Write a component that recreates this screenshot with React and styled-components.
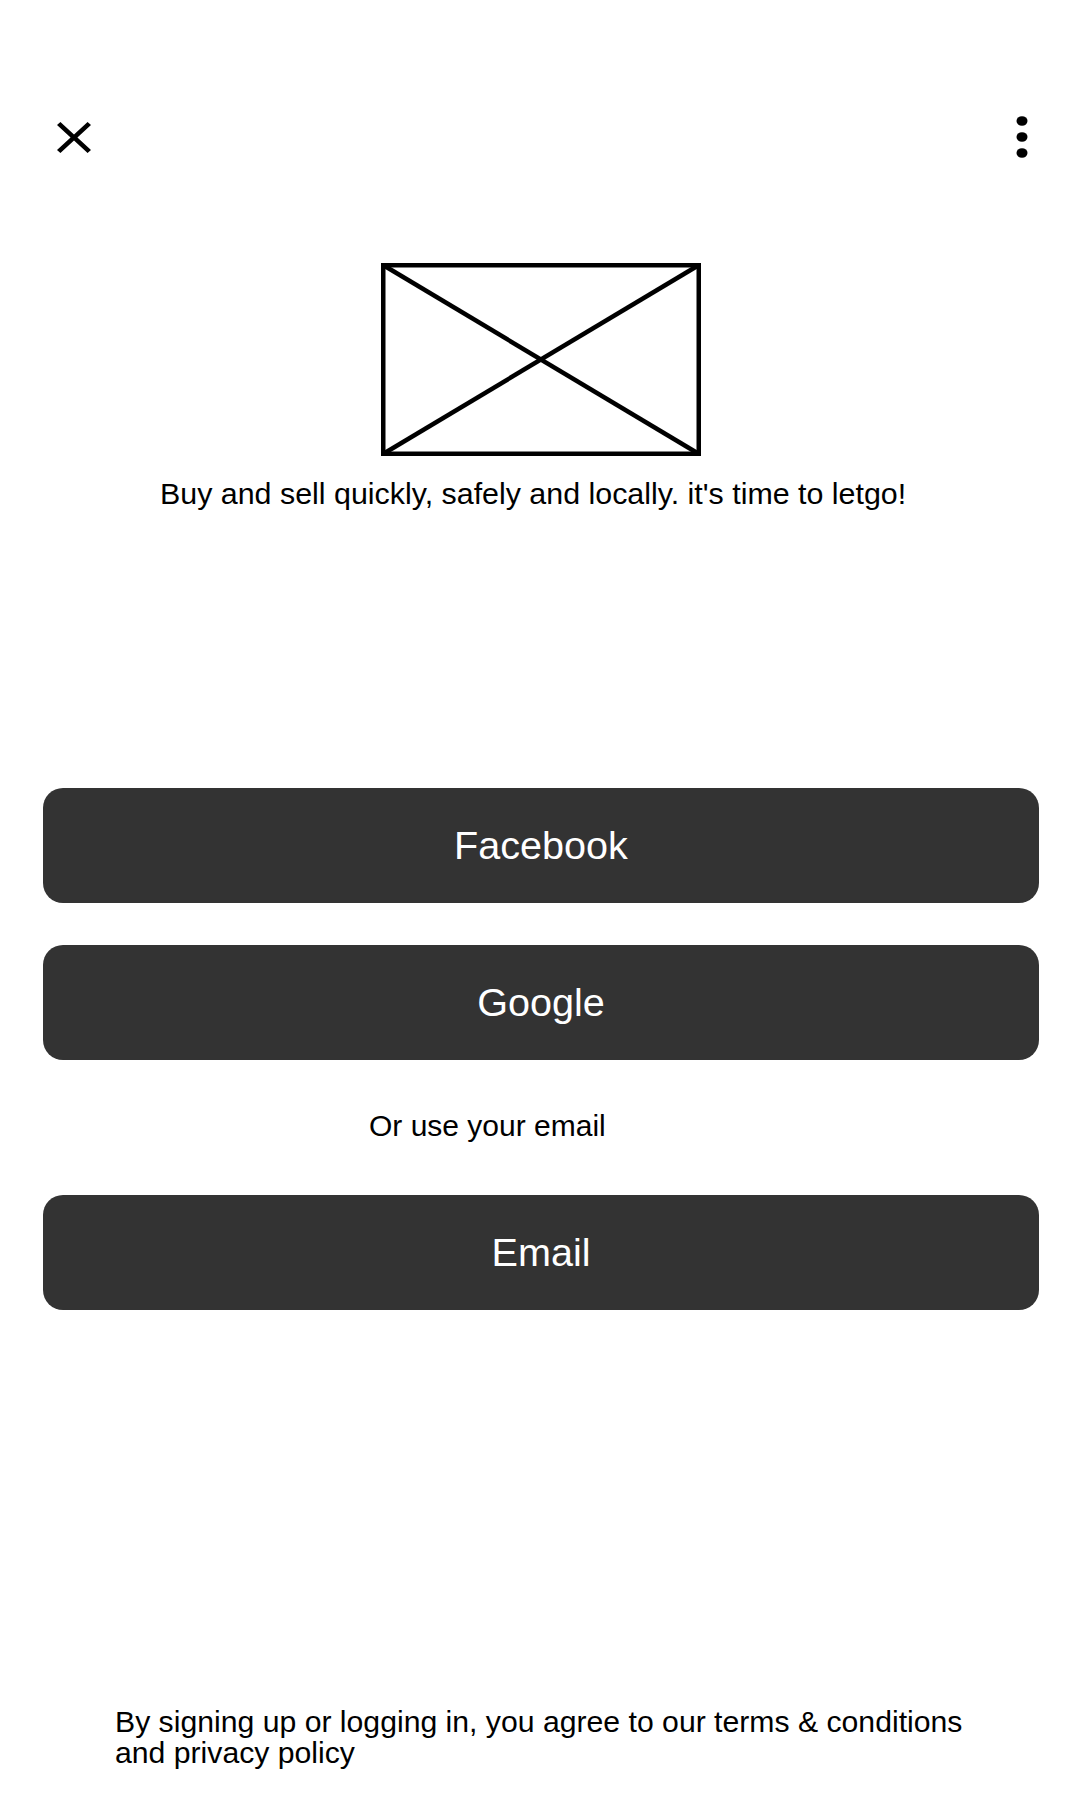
import styled, { createGlobalStyle } from 'styled-components'

const GlobalStyle = createGlobalStyle`
  html, body {
    margin: 0;
    padding: 0;
    background: #ffffff;
  }
  body {
    font-family: "Liberation Sans", Arial, sans-serif;
    color: #000000;
  }
`

const Page = styled.div`
  display: flex;
  flex-direction: column;
  box-sizing: border-box;
  width: 1080px;
  min-height: 1800px;
  padding-bottom: 32px;
  background: #ffffff;
`
const Header = styled.div`
  display: flex;
  align-items: center;
  justify-content: space-between;
  height: 60px;
  margin-top: 107px;
  padding: 0 52px 0 57px;
`
const IconButton = styled.button`
  display: flex;
  align-items: center;
  justify-content: center;
  padding: 0;
  border: none;
  background: none;
  cursor: pointer;
`
const Hero = styled.div`
  display: flex;
  justify-content: center;
  margin-top: 96px;
  padding-left: 2px;
`
const Tagline = styled.p`
  margin: 20px 0 0;
  padding-left: 160px;
  font-size: 30.4px;
  line-height: 34px;
`
const Actions = styled.div`
  display: flex;
  flex-direction: column;
  margin-top: ${props => props.offset}px;
  padding: 0 41px 0 43px;
`
const ActionButton = styled.button`
  display: flex;
  align-items: center;
  justify-content: center;
  height: 115px;
  margin-top: ${props => props.gap || 0}px;
  border: none;
  border-radius: 20px;
  background-color: #333333;
  color: #ffffff;
  font-family: "Liberation Sans", Arial, sans-serif;
  font-size: 39.6px;
  cursor: pointer;
`
const OrText = styled.p`
  margin: 49px 0 0;
  padding-left: 369px;
  font-size: 30px;
  line-height: 34px;
`
const Terms = styled.p`
  margin: auto 0 0;
  padding: 0 100px 0 115px;
  font-size: 30.2px;
  line-height: 31px;
`

function CloseIcon() {
  return (
    <svg width="34" height="31" viewBox="5 5 14 14" preserveAspectRatio="none">
      <path
        fill="#000"
        d="M19 6.41L17.59 5 12 10.59 6.41 5 5 6.41 10.59 12 5 17.59 6.41 19 12 13.41 17.59 19 19 17.59 13.41 12z"
      />
    </svg>
  )
}

function MoreIcon() {
  return (
    <svg width="12" height="44" viewBox="0 0 12 44">
      <ellipse cx="6" cy="6" rx="5.5" ry="4.8" fill="#000" />
      <ellipse cx="6" cy="22" rx="5.5" ry="4.8" fill="#000" />
      <ellipse cx="6" cy="38" rx="5.5" ry="4.8" fill="#000" />
    </svg>
  )
}

function ImagePlaceholder() {
  return (
    <svg width="320" height="193" viewBox="0 0 320 193">
      <g stroke="#000" strokeWidth="4.5" fill="none">
        <rect x="2.25" y="2.25" width="315.5" height="188.5" />
        <line x1="2" y1="2" x2="318" y2="191" />
        <line x1="318" y1="2" x2="2" y2="191" />
      </g>
    </svg>
  )
}

export default function App() {
  return (
    <Page>
      <GlobalStyle />
      <Header>
        <IconButton aria-label="Close"><CloseIcon /></IconButton>
        <IconButton aria-label="More"><MoreIcon /></IconButton>
      </Header>
      <Hero>
        <ImagePlaceholder />
      </Hero>
      <Tagline>Buy and sell quickly, safely and locally. it's time to letgo!</Tagline>
      <Actions offset={278}>
        <ActionButton>Facebook</ActionButton>
        <ActionButton gap={42}>Google</ActionButton>
      </Actions>
      <OrText>Or use your email</OrText>
      <Actions offset={52}>
        <ActionButton>Email</ActionButton>
      </Actions>
      <Terms>
        By signing up or logging in, you agree to our terms &amp; conditions and privacy policy
      </Terms>
    </Page>
  )
}
